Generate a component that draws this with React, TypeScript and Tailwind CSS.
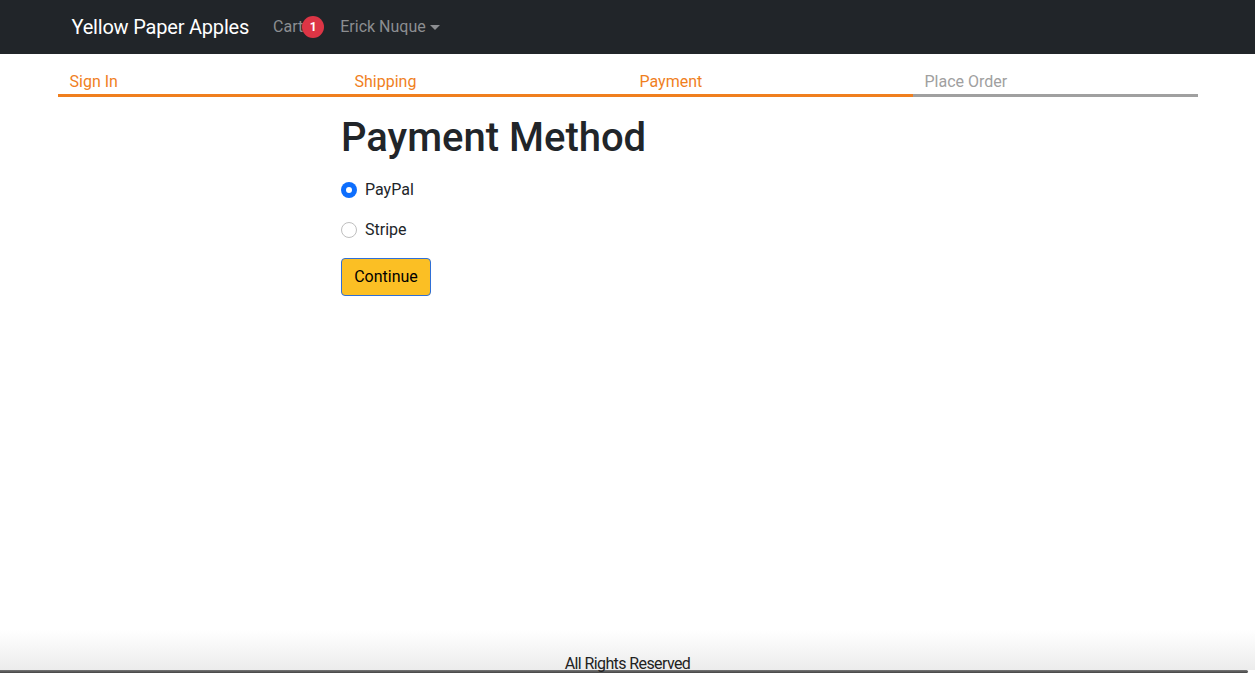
import React from "react";

export default function App() {
  const font = { fontFamily: "Roboto, Inter, 'Noto Sans', sans-serif" };
  return (
    <div className="flex h-[673px] flex-col overflow-hidden bg-white text-[#212529]" style={font}>
      <nav className="h-[54px] shrink-0 bg-[#212529]">
        <div className="mx-auto flex h-full w-[1140px] items-center px-[12px] pb-[1px]">
          <span className="ml-[2px] text-[20px] tracking-[-0.2px] text-white">Yellow Paper Apples</span>
          <span className="ml-[24px] flex items-center text-[16px] text-[#8c8e91]">
            Cart
            <span className="-ml-[1px] flex h-[22px] w-[22px] items-center justify-center rounded-full bg-[#dc3545] text-[12px] font-bold text-white">
              1
            </span>
          </span>
          <span className="ml-[16px] flex items-center text-[16px] text-[#8c8e91]">
            Erick Nuque
            <span className="ml-[4px] mt-[1px] h-0 w-0 border-x-[5px] border-t-[5px] border-x-transparent border-t-[#8c8e91]" />
          </span>
        </div>
      </nav>

      <div className="mx-auto mt-[14px] grid w-[1140px] grid-cols-4 text-[16px] leading-[24px]">
        <div className="border-b-[3px] border-[#f07f1e] px-[12px] pt-[2px] text-[#f07f1e]">Sign In</div>
        <div className="border-b-[3px] border-[#f07f1e] px-[12px] pt-[2px] text-[#f07f1e]">Shipping</div>
        <div className="border-b-[3px] border-[#f07f1e] px-[12px] pt-[2px] text-[#f07f1e]">Payment</div>
        <div className="border-b-[3px] border-[#a0a0a0] px-[12px] pt-[2px] text-[#a0a0a0]">Place Order</div>
      </div>

      <main className="flex-1">
        <div className="ml-[341px] w-[570px]">
          <h1 className="mt-[17px] text-[40px] font-medium leading-[48px]">Payment Method</h1>
          <div className="mt-[16px] flex flex-col gap-[16px]">
            <label className="flex h-[24px] items-center gap-[8px] text-[16px]">
              <span className="flex h-[16px] w-[16px] items-center justify-center rounded-full bg-[#0d6efd]">
                <span className="h-[6px] w-[6px] rounded-full bg-white" />
              </span>
              PayPal
            </label>
            <label className="flex h-[24px] items-center gap-[8px] text-[16px]">
              <span className="h-[16px] w-[16px] rounded-full border border-[#bfbfbf] bg-white" />
              Stripe
            </label>
          </div>
          <button className="mt-[16px] h-[38px] w-[90px] rounded-[4px] border border-[#2f6fd6] bg-[#fbbf24] text-[16px] text-black">
            Continue
          </button>
        </div>
      </main>

      <footer className="shrink-0">
        <div className="flex h-[40px] items-end justify-center bg-gradient-to-b from-white to-[#ececec]">
          <span className="translate-y-[2px] text-[16px] leading-[16px] tracking-[-0.6px] text-[#222]" style={{ fontFamily: "Roboto, 'Liberation Sans', sans-serif" }}>
            All Rights Reserved
          </span>
        </div>
        <div className="h-[3px] w-[1248px] rounded-r-[3px] bg-gradient-to-b from-[#777] to-[#444]" />
      </footer>
    </div>
  );
}
